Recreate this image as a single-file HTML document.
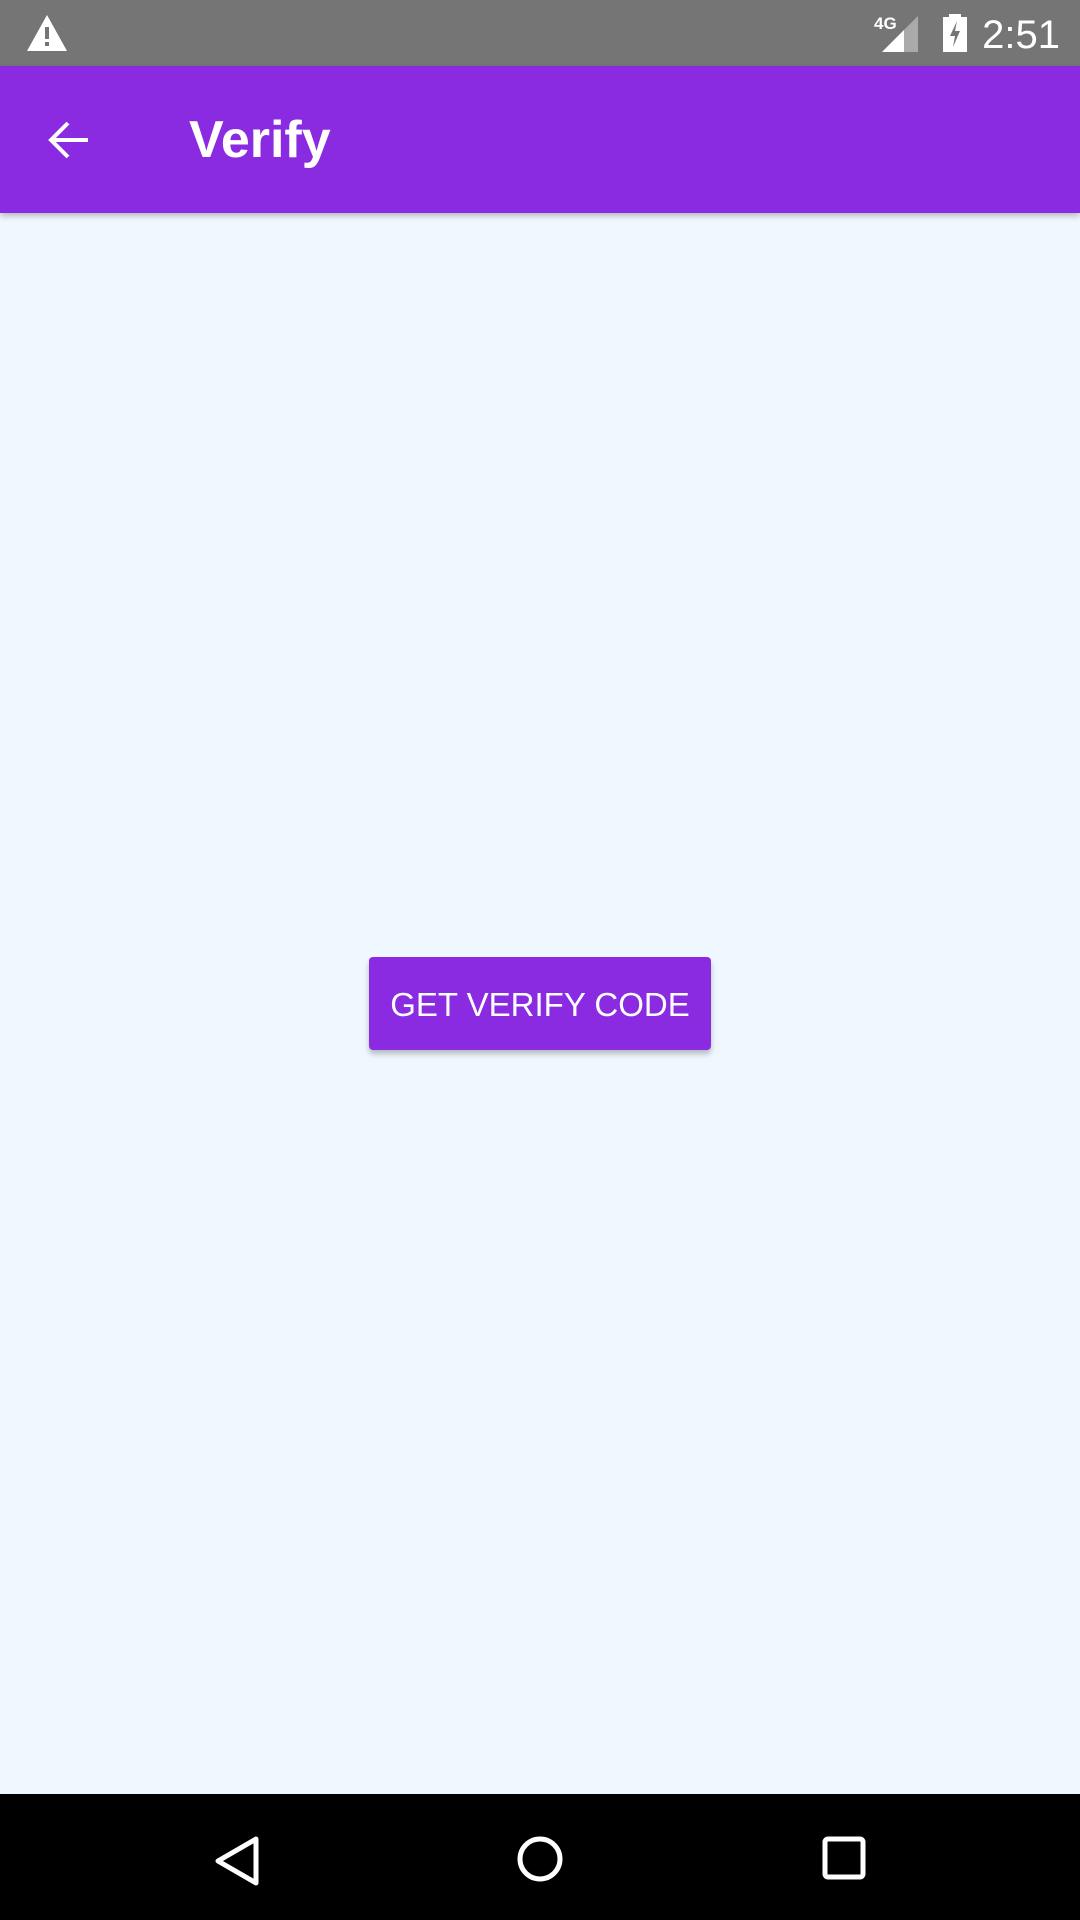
<!DOCTYPE html>
<html><head><meta charset="utf-8"><style>
body{margin:0;width:1080px;height:1920px;background:#F0F8FF;position:relative;overflow:hidden;font-family:"Liberation Sans",sans-serif}
.sb{position:absolute;top:0;left:0;width:1080px;height:66px;background:#757575}
.ab{position:absolute;top:66px;left:0;width:1080px;height:147px;background:#8A2BE2;box-shadow:0 3px 6px rgba(0,0,0,.25)}
.title{position:absolute;left:189px;top:44px;font-size:52px;font-weight:bold;color:#fff;line-height:60px}
.btn{position:absolute;left:369px;top:957px;width:342px;height:93px;background:#8A2BE2;border-radius:4px;box-shadow:0 4px 6px rgba(0,0,0,.25);color:#fff;font-size:33px;text-align:center;line-height:95px}
.nav{position:absolute;top:1794px;left:0;width:1080px;height:126px;background:#000}
.time{position:absolute;right:20px;top:12px;color:#fff;font-size:40px;line-height:46px}
</style></head><body>
<div class="sb">
<svg style="position:absolute;left:26px;top:14px" width="42" height="38" viewBox="0 0 42 38"><path d="M21 1L41 37H1Z" fill="#fff"/><rect x="19" y="13" width="4" height="12" fill="#757575"/><rect x="19" y="28" width="4" height="4" fill="#757575"/></svg>
<div style="position:absolute;left:874px;top:14px;color:#fff;font-size:17px;font-weight:bold">4G</div>
<svg style="position:absolute;left:882px;top:15px" width="40" height="38"><path d="M0 37L36 1V37Z" fill="#aaa"/><path d="M0 37L22 15V37Z" fill="#fff"/></svg>
<svg style="position:absolute;left:942px;top:14px" width="26" height="38"><rect x="7" y="0" width="12" height="4" fill="#fff"/><rect x="1" y="3" width="24" height="35" fill="#fff"/><path d="M15 7L8 22H13L11 33L18 17H13Z" fill="#757575"/></svg>
<div class="time">2:51</div>
</div>
<div class="ab">
<svg style="position:absolute;left:46px;top:52px" width="44" height="44" viewBox="0 0 44 44"><path d="M42 22H6M22 5L5 22L22 39" stroke="#fff" stroke-width="4" fill="none"/></svg>
<div class="title">Verify</div>
</div>
<div class="btn">GET VERIFY CODE</div>
<div class="nav">
<svg style="position:absolute;left:214px;top:41px" width="46" height="52"><path d="M42 4V48L4 26Z" stroke="#fff" stroke-width="5" fill="none" stroke-linejoin="round"/></svg>
<svg style="position:absolute;left:516px;top:41px" width="48" height="48"><circle cx="24" cy="24" r="20" stroke="#fff" stroke-width="5" fill="none"/></svg>
<svg style="position:absolute;left:822px;top:42px" width="44" height="44"><rect x="3" y="3" width="38" height="38" rx="3" stroke="#fff" stroke-width="5" fill="none"/></svg>
</div>
</body></html>
